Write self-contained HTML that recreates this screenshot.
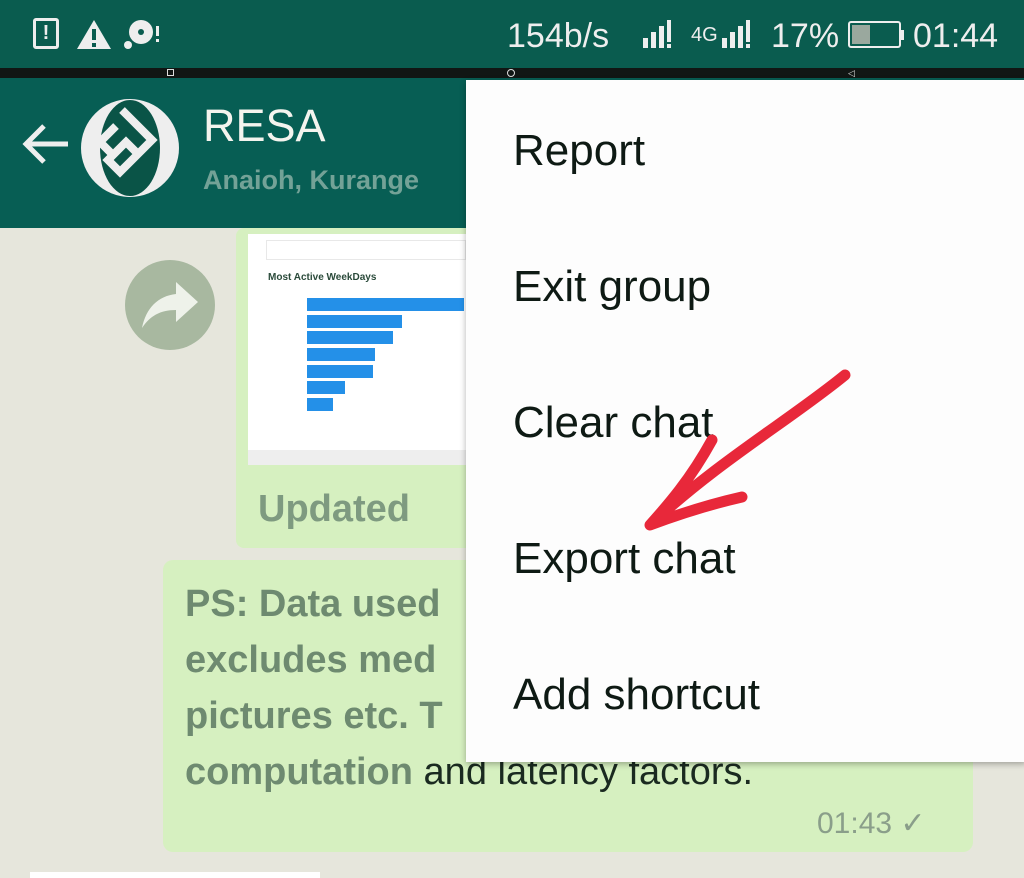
<!DOCTYPE html>
<html><head><meta charset="utf-8"><style>
*{margin:0;padding:0;box-sizing:border-box}
body{width:1024px;height:878px;overflow:hidden;background:#e6e6dc;font-family:"Liberation Sans",sans-serif;position:relative}
.a{position:absolute}
.mi{position:absolute;left:513px;font-size:44px;color:#0e1a14;line-height:1}
</style></head><body>
<div class="a" style="left:0;top:0;width:1024px;height:68px;background:#0a5c4f"></div>
<div class="a" style="left:0;top:68px;width:1024px;height:10px;background:#111614"></div>
<div class="a" style="left:167px;top:69px;width:7px;height:7px;border:1px solid #ddd"></div>
<div class="a" style="left:507px;top:69px;width:8px;height:8px;border:1px solid #ddd;border-radius:50%"></div>
<div class="a" style="left:848px;top:68px;color:#ddd;font-size:9px">◁</div>
<div class="a" style="left:33px;top:18px;width:26px;height:31px;border:3px solid #eee;border-radius:3px;color:#eee;font-weight:bold;font-size:20px;text-align:center;line-height:25px">!</div>
<svg class="a" style="left:76px;top:18px" width="36" height="32"><path d="M18 2 L35 31 L1 31Z" fill="#eee"/><rect x="16" y="11" width="4" height="11" fill="#0a5c4f"/><rect x="16" y="25" width="4" height="4" fill="#0a5c4f"/></svg>
<svg class="a" style="left:122px;top:18px" width="40" height="32"><circle cx="19" cy="14" r="12" fill="#eee"/><circle cx="19" cy="14" r="3" fill="#0a5c4f"/><circle cx="6" cy="27" r="4" fill="#eee"/><rect x="34" y="8" width="3" height="10" fill="#eee"/><rect x="34" y="21" width="3" height="3" fill="#eee"/></svg>
<div class="a" style="left:507px;top:17px;color:#eee;font-size:34px">154b/s</div>
<svg class="a" style="left:640px;top:18px" width="200" height="32"><g fill="#eee"><rect x="3" y="20" width="5" height="10"/><rect x="11" y="14" width="5" height="16"/><rect x="19" y="8" width="5" height="22"/><rect x="27" y="2" width="4" height="22"/><rect x="27" y="26" width="4" height="4"/>
<rect x="82" y="20" width="5" height="10"/><rect x="90" y="14" width="5" height="16"/><rect x="98" y="8" width="5" height="22"/><rect x="106" y="2" width="4" height="22"/><rect x="106" y="26" width="4" height="4"/></g></svg>
<div class="a" style="left:691px;top:24px;color:#eee;font-size:20px">4G</div>
<div class="a" style="left:771px;top:17px;color:#eee;font-size:34px">17%</div>
<div class="a" style="left:848px;top:21px;width:53px;height:27px;border:2px solid #eee;border-radius:3px"><div style="position:absolute;left:2px;top:2px;width:18px;height:19px;background:#9aa89e"></div></div>
<div class="a" style="left:901px;top:30px;width:3px;height:10px;background:#eee"></div>
<div class="a" style="left:913px;top:17px;color:#eee;font-size:34px">01:44</div>
<div class="a" style="left:0;top:78px;width:1024px;height:150px;background:#075e54"></div>
<svg class="a" style="left:22px;top:124px" width="50" height="46"><path d="M22 2 L4 20 L22 38 M4 20 H46" stroke="#eee" stroke-width="5" fill="none"/></svg>
<svg class="a" style="left:80px;top:98px" width="100" height="100"><circle cx="50" cy="50" r="49" fill="#eee"/><ellipse cx="50" cy="50" rx="30" ry="48" fill="#0a5447"/><path d="M42 12 L72 42 L40 74 L28 62 L46 44 L56 54" stroke="#eee" stroke-width="8" fill="none"/><path d="M36 28 L20 44 L34 58" stroke="#eee" stroke-width="8" fill="none"/></svg>
<div class="a" style="left:203px;top:100px;color:#f4f4ee;font-size:45px">RESA</div>
<div class="a" style="left:203px;top:165px;color:#8fb3a8;font-size:27px;font-weight:bold;opacity:.8">Anaioh, Kurange</div>
<div class="a" style="left:125px;top:260px;width:90px;height:90px;border-radius:50%;background:#a8b8a0"></div>
<svg class="a" style="left:140px;top:280px" width="60" height="50"><path d="M36 2 L58 22 L36 42 V30 C20 30 10 36 2 48 C6 28 18 16 36 14Z" fill="#eef2ea"/></svg>
<div class="a" style="left:236px;top:228px;width:240px;height:320px;background:#d6f0c0;border-radius:8px"></div>
<div class="a" style="left:248px;top:234px;width:220px;height:230px;background:#fff"></div>
<div class="a" style="left:266px;top:240px;width:200px;height:20px;border:1px solid #e8e8e8"></div>
<div class="a" style="left:268px;top:272px;font-size:10px;font-weight:bold;color:#2a4a3a">Most Active WeekDays</div>
<div class="a" style="left:307px;top:298px;width:157px;height:13px;background:#2490e8"></div>
<div class="a" style="left:307px;top:315px;width:95px;height:13px;background:#2490e8"></div>
<div class="a" style="left:307px;top:331px;width:86px;height:13px;background:#2490e8"></div>
<div class="a" style="left:307px;top:348px;width:68px;height:13px;background:#2490e8"></div>
<div class="a" style="left:307px;top:365px;width:66px;height:13px;background:#2490e8"></div>
<div class="a" style="left:307px;top:381px;width:38px;height:13px;background:#2490e8"></div>
<div class="a" style="left:307px;top:398px;width:26px;height:13px;background:#2490e8"></div>
<div class="a" style="left:248px;top:450px;width:220px;height:15px;background:#eee"></div>
<div class="a" style="left:258px;top:488px;font-size:38px;font-weight:bold;color:#7e9a80">Updated</div>
<div class="a" style="left:163px;top:560px;width:810px;height:292px;background:#d6f0c0;border-radius:10px"></div>
<div class="a" style="left:185px;top:576px;font-size:38px;line-height:56px;color:#6e8a70;font-weight:bold;width:780px">PS: Data used<br>excludes med<br>pictures etc. T<br>computation <span style="color:#1a2a20;font-weight:normal">and latency factors.</span></div>
<div class="a" style="left:817px;top:806px;font-size:30px;color:#8a9e8a">01:43 ✓</div>
<div class="a" style="left:30px;top:872px;width:290px;height:6px;background:#fff"></div>
<div class="a" style="left:466px;top:80px;width:560px;height:682px;background:#fdfdfd;box-shadow:0 2px 6px rgba(0,0,0,.3)"></div>
<div class="mi" style="top:129px">Report</div>
<div class="mi" style="top:265px">Exit group</div>
<div class="mi" style="top:401px">Clear chat</div>
<div class="mi" style="top:537px">Export chat</div>
<div class="mi" style="top:673px">Add shortcut</div>
<svg class="a" style="left:0;top:0" width="1024" height="878"><path d="M845 375 C790 420 720 460 650 525 M712 440 C690 480 668 505 650 525 C690 510 720 502 742 497" stroke="#e8283a" stroke-width="11" fill="none" stroke-linecap="round" stroke-linejoin="round"/></svg>
</body></html>
